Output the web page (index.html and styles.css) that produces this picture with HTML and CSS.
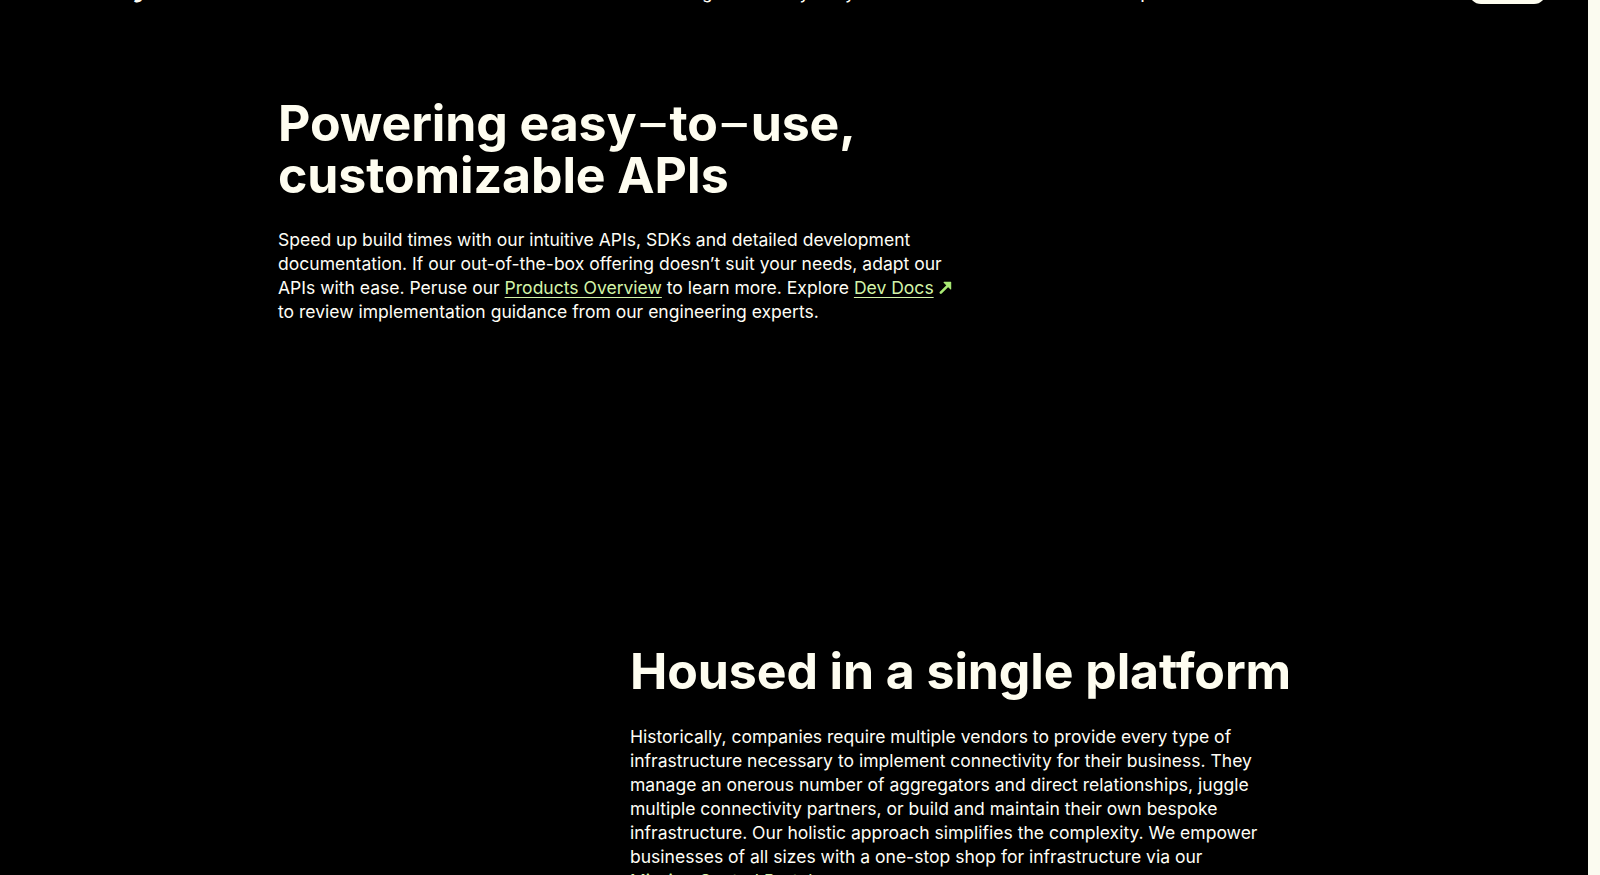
FILE: index.html
```html
<!DOCTYPE html>
<html lang="en">
<head>
<meta charset="utf-8">
<title>Telnyx — Powering easy-to-use, customizable APIs</title>
<link rel="stylesheet" href="styles.css">
</head>
<body>
<div class="page">
  <header class="site-header">
    <a class="logo" href="#">telnyx</a>
    <nav class="main-nav">
      <a href="#">Products<svg class="chev" viewBox="0 0 14 14" width="14" height="14"><path d="M3 5 L7 9 L11 5" fill="none" stroke="currentColor" stroke-width="1.6"/></svg></a>
      <a href="#">Solutions<svg class="chev" viewBox="0 0 14 14" width="14" height="14"><path d="M3 5 L7 9 L11 5" fill="none" stroke="currentColor" stroke-width="1.6"/></svg></a>
      <a href="#">Pricing</a>
      <a href="#">Why Telnyx</a>
      <a href="#">Resources<svg class="chev" viewBox="0 0 14 14" width="14" height="14"><path d="M3 5 L7 9 L11 5" fill="none" stroke="currentColor" stroke-width="1.6"/></svg></a>
      <a href="#">Developers</a>
    </nav>
    <a class="btn-signup" href="#">Sign up</a>
  </header>

  <main>
    <section class="intro">
      <h2 class="title">Powering easy<span class="dash">–</span>to<span class="dash">–</span>use,<br>customizable APIs</h2>
      <p class="copy">Speed up build times with our intuitive APIs, SDKs and detailed development documentation. If our out-of-the-box offering doesn’t suit your needs, adapt our APIs with ease. Peruse our <a class="link" href="#">Products Overview</a> to learn more. Explore <a class="link" href="#">Dev Docs</a><svg class="ext" viewBox="0 0 16 16" width="15" height="15" aria-hidden="true"><path d="M3 13.5 L10.5 6" stroke="currentColor" stroke-width="2.8" stroke-linecap="round" fill="none"/><path d="M6.5 2.5 H13.5 V9.5 Z" fill="currentColor" stroke="currentColor" stroke-width="1.2" stroke-linejoin="round"/></svg> to review implementation guidance from our engineering experts.</p>
    </section>

    <section class="platform">
      <div class="platform-media"></div>
      <div class="platform-text">
        <h2 class="title">Housed in a single platform</h2>
        <p class="copy">Historically, companies require multiple vendors to provide every type of infrastructure necessary to implement connectivity for their business. They manage an onerous number of aggregators and direct relationships, juggle multiple connectivity partners, or build and maintain their own bespoke infrastructure. Our holistic approach simplifies the complexity. We empower businesses of all sizes with a one-stop shop for infrastructure via our <a class="link" href="#">Mission Control Portal</a>.</p>
      </div>
    </section>
  </main>
</div>
</body>
</html>
```

FILE: styles.css
```css
* { box-sizing: border-box; }

html, body {
  margin: 0;
  padding: 0;
  height: 100%;
  overflow: hidden;
}

body {
  background: #fbfbf0;
  font-family: Inter, "Noto Sans", "Liberation Sans", sans-serif;
  color: #fefdf5;
}

.page {
  width: 1588px;
  height: 875px;
  background: #000;
  overflow: hidden;
}

/* header, scrolled mostly out of view */
.site-header {
  height: 64px;
  margin-top: -60px;
  display: flex;
  align-items: flex-end;
  padding: 0 42px 0 86px;
  font-size: 16px;
  font-weight: 500;
}
.site-header a { color: #fefdf5; text-decoration: none; }

.logo {
  font-size: 26px;
  line-height: 30px;
  font-weight: 800;
  letter-spacing: -0.5px;
  margin-bottom: 1px;
}

.main-nav {
  display: flex;
  gap: 62px;
  margin-left: 192px;
  line-height: 20px;
  margin-bottom: 1px;
}
.main-nav a { display: flex; align-items: center; gap: 6px; }

.chev { display: block; }

.btn-signup {
  margin-left: auto;
  background: #fefdf0;
  color: #000 !important;
  border-radius: 12px;
  height: 36px;
  line-height: 36px;
  width: 77px;
  text-align: center;
}

/* sections */
.title {
  margin: 0;
  font-size: 50px;
  line-height: 52px;
  font-weight: 700;
  letter-spacing: -0.1px;
  color: #fefdf0;
}

.dash {
  font-weight: 400;
  margin: 0 4px;
}

.copy {
  margin: 27px 0 0;
  font-size: 17.55px;
  line-height: 24px;
  color: #fefdf5;
}

.link {
  color: #d3f4a8;
  text-decoration: underline;
  text-decoration-thickness: 1px;
  text-underline-offset: 3px;
}

.ext {
  color: #a9ea74;
  vertical-align: -1px;
  margin-left: 4px;
}

.intro {
  padding: 93px 0 0 278px;
  width: 958px;
}

.platform {
  display: grid;
  grid-template-columns: 352px 665px;
  padding: 321px 0 0 278px;
}
.platform .copy {
  margin-top: 28px;
  max-width: 634px;
}
```
